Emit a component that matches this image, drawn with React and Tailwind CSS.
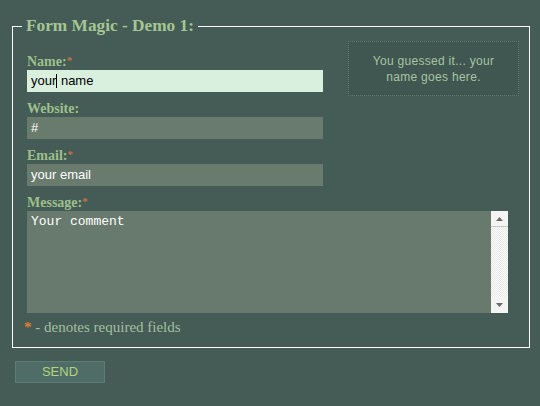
import React from "react";

function Label({ text, req }) {
  return (
    <div className="h-[17px] leading-[17px] text-[14px] font-bold text-[#9ebf8c] [font-family:'Liberation_Serif',serif]">
      {text}
      {req && <span className="text-[#c8714a] text-[11px] align-top relative top-[-1px]">*</span>}
    </div>
  );
}

function Field({ value }) {
  return (
    <div className="h-[22px] w-[296px] px-[4px] text-[13px] leading-[22px] text-white bg-[#687b6d] [font-family:'Liberation_Sans',Arial,sans-serif]">
      {value}
    </div>
  );
}

export default function App() {
  return (
    <div className="w-[540px] h-[406px] bg-[#445c55] pt-[16px] overflow-hidden">
      <fieldset className="ml-[12px] w-[518px] border border-white pl-[9px] pr-[10px] pt-[5px] pb-[10px] m-0">
        <legend className="px-[4px] text-[17.3px] leading-[20px] font-bold text-[#a5c694] [font-family:'Liberation_Serif',serif]">
          Form Magic - Demo 1:
        </legend>
        <div className="ml-[5px]">
          <div className="flex justify-between">
            <div className="pt-[12px]">
              <Label text="Name:" req />
              <div className="h-[22px] w-[296px] px-[4px] bg-[#d9f0df] text-black text-[13px] leading-[22px] [font-family:'Liberation_Sans',Arial,sans-serif]">
                your<span className="inline-block w-px h-[14px] bg-black align-middle -mt-[2px]"></span> name
              </div>
              <div className="mt-[8px]">
                <Label text="Website:" />
                <Field value="#" />
              </div>
              <div className="mt-[8px]">
                <Label text="Email:" req />
                <Field value="your email" />
              </div>
            </div>
            <div className="w-[171px] h-[55px] border border-dotted border-[#5e766b] bg-[#3f5750] flex flex-col items-center justify-center text-[12px] leading-[16px] tracking-[0.3px] text-[#a8c3a4] [font-family:'Liberation_Sans',Arial,sans-serif]">
              <div>You guessed it... your</div>
              <div>name goes here.</div>
            </div>
          </div>
          <div className="mt-[8px]">
            <Label text="Message:" req />
            <div className="w-[481px] h-[102px] bg-[#687a6d] flex">
              <div className="flex-1 px-[4px] pt-[3px] text-[13px] leading-[16px] text-white [font-family:'Liberation_Mono','Courier_New',monospace]">
                Your comment
              </div>
              <div className="w-[17px] h-full flex flex-col bg-[#f1f1f1] bg-[repeating-conic-gradient(#ffffff_0_25%,#e6e6e6_0_50%)] bg-[length:2px_2px]">
                <div className="h-[16px] bg-[#f4f4f4] border-b border-[#c8c8c8] flex items-center justify-center">
                  <svg width="7" height="4" viewBox="0 0 7 4"><path d="M3.5 0L7 4H0z" fill="#6a6a6a" /></svg>
                </div>
                <div className="flex-1"></div>
                <div className="h-[16px] bg-[#f4f4f4] flex items-center justify-center">
                  <svg width="7" height="4" viewBox="0 0 7 4"><path d="M0 0H7L3.5 4z" fill="#6a6a6a" /></svg>
                </div>
              </div>
            </div>
          </div>
          <div className="mt-[4px] -ml-[3px] h-[20px] leading-[20px] text-[15px] text-[#a3bfa0] [font-family:'Liberation_Serif',serif]">
            <span className="text-[#e07d2e] font-bold">*</span> - denotes required fields
          </div>
        </div>
      </fieldset>
      <button className="mt-[13px] ml-[15px] w-[90px] h-[22px] bg-[#4f6d66] border border-[#5f7c74] text-[13px] text-[#b5d27c] [font-family:'Liberation_Sans',Arial,sans-serif] leading-[20px] block">
        SEND
      </button>
    </div>
  );
}
